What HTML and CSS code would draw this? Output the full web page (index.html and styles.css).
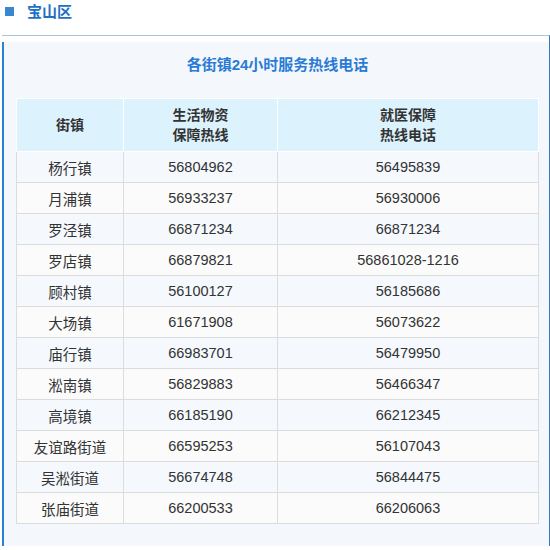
FILE: index.html
```html
<!DOCTYPE html>
<html lang="zh-CN">
<head>
<meta charset="utf-8">
<title>宝山区</title>
<link rel="stylesheet" href="styles.css">
</head>
<body>
<h2 class="district"><span class="square"></span><span class="district-name">宝山区</span></h2>
<div class="frame">
  <div class="panel">
    <div class="title">各街镇24小时服务热线电话</div>
    <table class="hotlines">
      <colgroup><col class="c1"><col class="c2"><col class="c3"></colgroup>
      <thead>
        <tr><th>街镇</th><th>生活物资<br>保障热线</th><th>就医保障<br>热线电话</th></tr>
      </thead>
      <tbody>
        <tr><td>杨行镇</td><td>56804962</td><td>56495839</td></tr>
        <tr><td>月浦镇</td><td>56933237</td><td>56930006</td></tr>
        <tr><td>罗泾镇</td><td>66871234</td><td>66871234</td></tr>
        <tr><td>罗店镇</td><td>66879821</td><td>56861028-1216</td></tr>
        <tr><td>顾村镇</td><td>56100127</td><td>56185686</td></tr>
        <tr><td>大场镇</td><td>61671908</td><td>56073622</td></tr>
        <tr><td>庙行镇</td><td>66983701</td><td>56479950</td></tr>
        <tr><td>淞南镇</td><td>56829883</td><td>56466347</td></tr>
        <tr><td>高境镇</td><td>66185190</td><td>66212345</td></tr>
        <tr><td>友谊路街道</td><td>66595253</td><td>56107043</td></tr>
        <tr><td>吴淞街道</td><td>56674748</td><td>56844475</td></tr>
        <tr><td>张庙街道</td><td>66200533</td><td>66206063</td></tr>
      </tbody>
    </table>
  </div>
</div>
</body>
</html>
```

FILE: styles.css
```css
html, body {
  margin: 0;
  padding: 0;
  background: #ffffff;
}
body {
  font-family: "Liberation Sans", "Noto Sans CJK SC", sans-serif;
  color: #333333;
}
.district {
  margin: 0;
  height: 23px;
  display: flex;
  align-items: center;
  padding-left: 5px;
  font-size: 15px;
  font-weight: bold;
  color: #1f6fc5;
}
.square {
  width: 9px;
  height: 9px;
  background: #3a86cf;
  margin-right: 13px;
}
.district-name {
  line-height: 20px;
}
.frame {
  margin: 12px 0 0 2px;
  width: 547px;
  border-top: 1px solid #a9c6e3;
  border-right: 1px solid #3d74b3;
  padding-top: 6px;
}
.panel {
  border-left: 2px solid #2c80d0;
  background: #f4f8fd;
  padding: 0 10px 22px 12px;
}
.title {
  height: 56px;
  padding-top: 12px;
  box-sizing: border-box;
  line-height: 22px;
  text-align: center;
  font-size: 15px;
  font-weight: bold;
  color: #2b7bd6;
}
.hotlines {
  width: 522px;
  border-collapse: collapse;
  table-layout: fixed;
  font-size: 14px;
}
.c1 { width: 107px; }
.c2 { width: 154px; }
.c3 { width: 261px; }
.hotlines th {
  background: #dcf2fd;
  border: 1px solid #ffffff;
  height: 52px;
  padding: 0;
  line-height: 20px;
  font-weight: bold;
  color: #333333;
  text-align: center;
}
.hotlines td {
  border: 1px solid #dcdcdc;
  height: 30px;
  padding: 0;
  text-align: center;
  font-size: 14.5px;
  color: #333333;
}
.hotlines tbody tr:nth-child(odd) td {
  background: #f5f9fe;
}
.hotlines tbody tr:nth-child(even) td {
  background: #fbfbfb;
}
```
